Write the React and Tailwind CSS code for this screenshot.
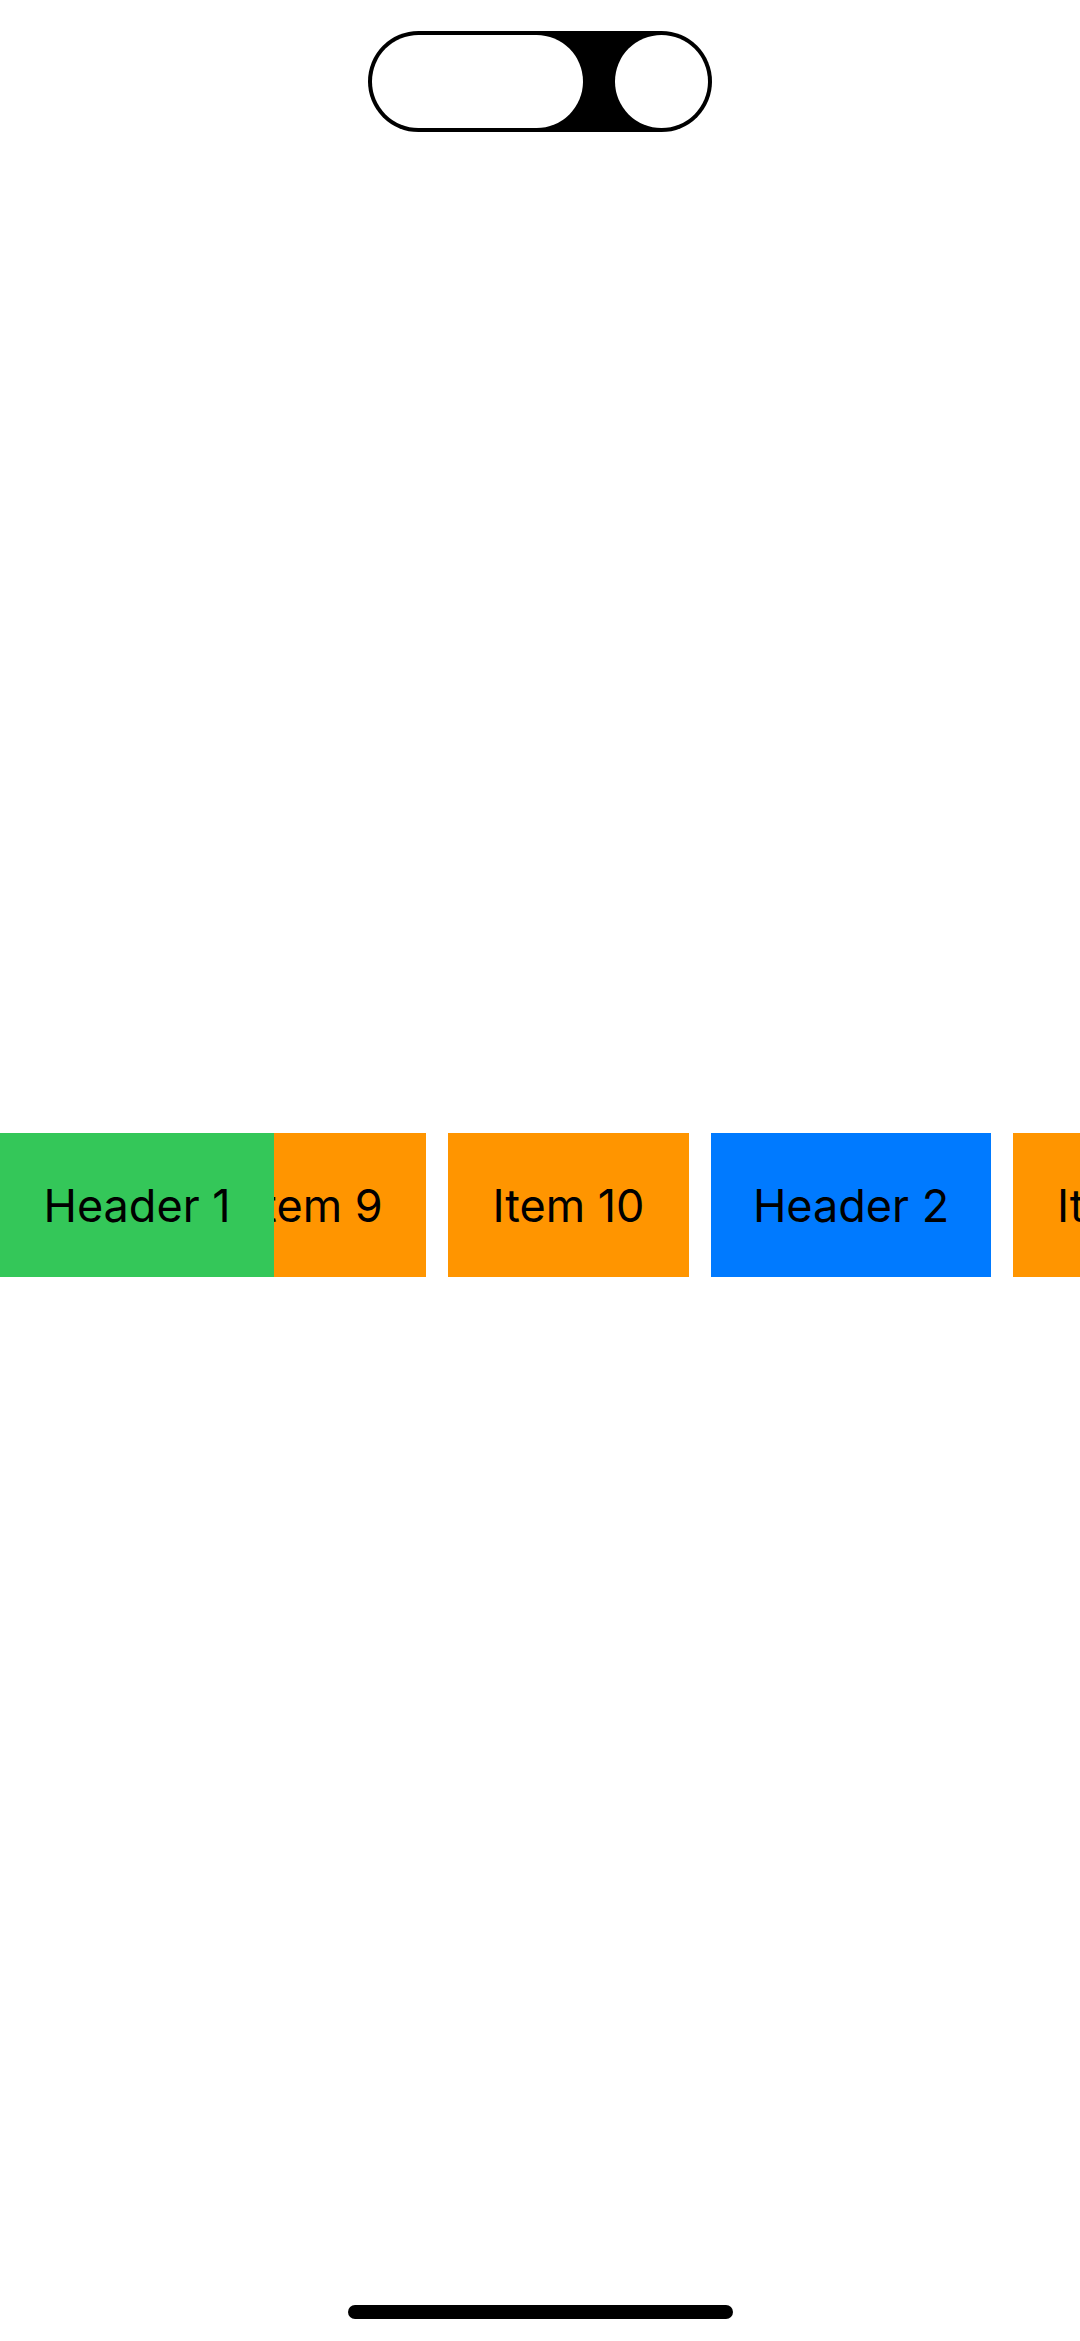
const cells = [
  { label: "Header 1", style: "sticky left-0 z-10 w-[274px] bg-[#34c759]" },
  { label: "Item 9", style: "-ml-[68px] w-[220px] bg-[#ff9500]" },
  { label: "Item 10", style: "ml-[22px] w-[241px] bg-[#ff9500]" },
  { label: "Header 2", style: "ml-[22px] w-[280px] bg-[#007aff]" },
  { label: "Item 11", style: "ml-[22px] w-[230px] bg-[#ff9500]" },
];

function DynamicIsland() {
  return (
    <header className="flex justify-center pt-[31px]">
      <div className="flex h-[101px] w-[344px] justify-between rounded-full bg-black p-1">
        <div className="w-[211px] rounded-full bg-white" />
        <div className="w-[93px] rounded-full bg-white" />
      </div>
    </header>
  );
}

export default function App() {
  return (
    <div className="flex min-h-screen flex-col bg-white font-['Inter',sans-serif] text-black">
      <DynamicIsland />
      <main className="flex flex-1 items-center">
        <ul className="flex w-full overflow-hidden">
          {cells.map(({ label, style }) => (
            <li
              key={label}
              className={`flex h-[144px] shrink-0 items-center justify-center whitespace-nowrap pt-[2px] text-[45px] leading-[56px] ${style}`}
            >
              {label}
            </li>
          ))}
        </ul>
      </main>
      <footer className="flex justify-center pt-[27px] pb-[22px]">
        <div className="h-[14px] w-[385px] rounded-full bg-black" />
      </footer>
    </div>
  );
}
